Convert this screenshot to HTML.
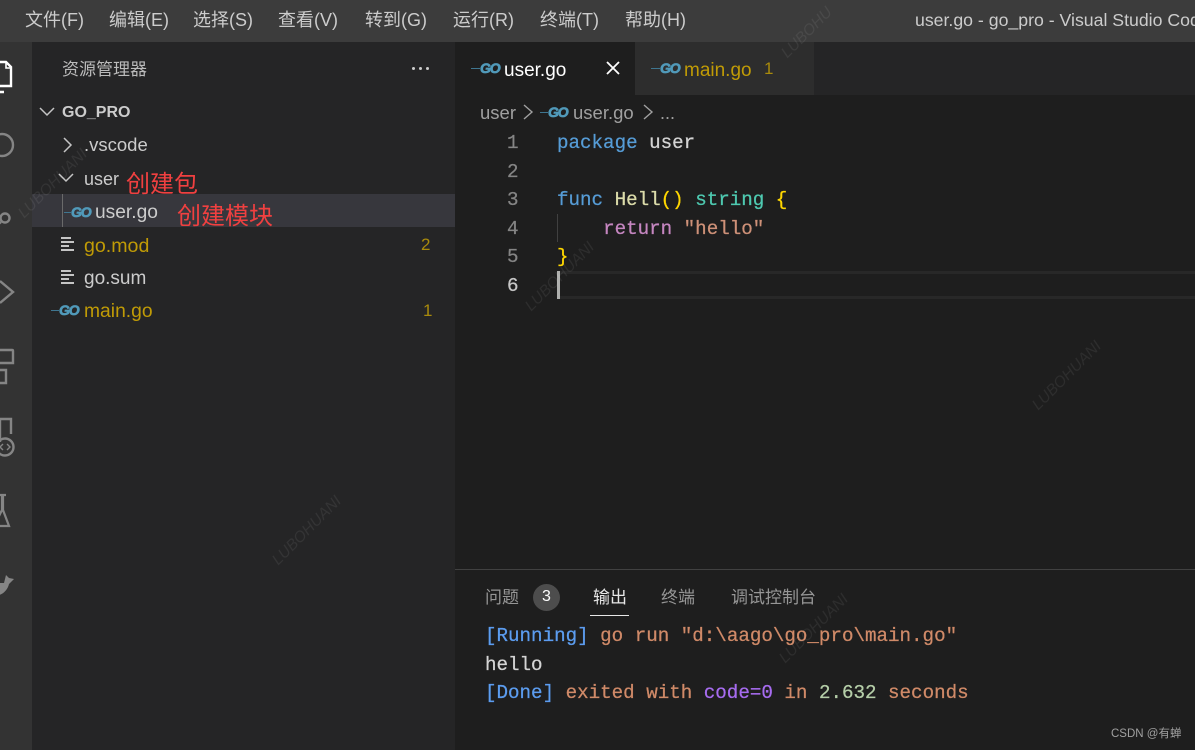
<!DOCTYPE html>
<html><head><meta charset="utf-8"><style>
html,body{margin:0;padding:0;background:#1e1e1e}
#p{position:relative;width:1195px;height:750px;overflow:hidden;background:#1e1e1e;font-family:"Liberation Sans","Noto Sans CJK SC",sans-serif}
#p div,#p span.a{position:absolute;white-space:pre}
.t{line-height:28px;height:28px}
.m{font-family:"Liberation Mono","Noto Sans CJK SC",monospace;font-size:19.2px;line-height:28px;height:28px;-webkit-text-stroke:.25px}
.go{font-weight:bold;font-style:italic;color:#519aba;font-size:14px;line-height:16px;letter-spacing:-1.2px;-webkit-text-stroke:.7px #519aba}
.dash{height:1px;background:#3f7690}
.wm{font-family:"Liberation Sans",sans-serif;font-style:italic;color:rgba(255,255,255,.07);font-size:15.5px;transform:rotate(-45deg);transform-origin:center}
</style></head><body><div id="p">
<div style="left:0;top:0;width:1195px;height:42px;background:#3c3c3c"></div>
<div style="left:0;top:42px;width:32px;height:708px;background:#333"></div>
<div style="left:32px;top:42px;width:423px;height:708px;background:#252526"></div>
<div style="left:635px;top:42px;width:179px;height:53px;background:#2d2d2d"></div>
<div style="left:814px;top:42px;width:381px;height:53px;background:#252526"></div>
<div style="left:455px;top:42px;width:180px;height:53px;background:#1e1e1e"></div>
<div style="left:455px;top:569px;width:740px;height:1px;background:#414141"></div>

<div class="t" style="left:25px;top:6px;font-size:18px;color:#ccc">文件(F)</div>
<div class="t" style="left:109px;top:6px;font-size:18px;color:#ccc">编辑(E)</div>
<div class="t" style="left:193px;top:6px;font-size:18px;color:#ccc">选择(S)</div>
<div class="t" style="left:278px;top:6px;font-size:18px;color:#ccc">查看(V)</div>
<div class="t" style="left:365px;top:6px;font-size:18px;color:#ccc">转到(G)</div>
<div class="t" style="left:453px;top:6px;font-size:18px;color:#ccc">运行(R)</div>
<div class="t" style="left:540px;top:6px;font-size:18px;color:#ccc">终端(T)</div>
<div class="t" style="left:625px;top:6px;font-size:18px;color:#ccc">帮助(H)</div>
<div class="t" style="left:915px;top:6px;font-size:17.7px;color:#ccc">user.go - go_pro - Visual Studio Code</div>

<svg style="position:absolute;left:0;top:42px" width="32" height="560" fill="none" stroke="#858585" stroke-width="2.4">
<path d="M-2 20H6L11 25V44H0M-2 20V50H4" stroke="#fff"/><path d="M6 20V26H11" stroke="#fff" stroke-width="1.6"/>
<circle cx="2" cy="103" r="11"/>
<circle cx="5" cy="176" r="4.5"/><path d="M1 180L-4 184"/>
<path d="M0 239L13 250L0 261"/>
<path d="M-2 308H12Q13 308 13 309V321H-2M-2 328H6V341H-2"/>
<path d="M0 377H11V392M0 400V377"/><circle cx="5" cy="405" r="8.5"/><path d="M3 402L0 405L3 408M7 402L10 405L7 408" stroke-width="1.4"/>
<path d="M-2 453H6M2 453V468L-6 484H9L3 468V453" stroke-width="2.2"/>
<path d="M-2 553C3 553 8 547 9 542L14 537L9 536L6 533L4 541H-2Z" fill="#858585" stroke="none"/>
</svg>

<div class="t" style="left:62px;top:56px;font-size:17px;color:#bbb">资源管理器</div>
<div style="left:412px;top:67px;width:3px;height:3px;border-radius:50%;background:#ccc"></div>
<div style="left:419px;top:67px;width:3px;height:3px;border-radius:50%;background:#ccc"></div>
<div style="left:426px;top:67px;width:3px;height:3px;border-radius:50%;background:#ccc"></div>
<div class="t" style="left:62px;top:99px;font-size:16px;font-weight:bold;color:#ccc">GO_PRO</div>
<div style="left:32px;top:194px;width:423px;height:33px;background:#37373d"></div>
<div style="left:62px;top:194px;width:1px;height:33px;background:#6a6a6a"></div>
<svg style="position:absolute;left:36px;top:100px" width="50" height="90" fill="none" stroke="#c5c5c5" stroke-width="1.5">
<path d="M4 8L11 15L18 8"/><path d="M28 38L35 45L28 52"/><path d="M23 74L30 81L37 74"/>
</svg>
<div class="t" style="left:84px;top:131px;font-size:18.5px;color:#ccc">.vscode</div>
<div class="t" style="left:84px;top:165px;font-size:18px;color:#ccc">user</div>
<div class="t" style="left:95px;top:199px;font-size:19.2px;color:#ccc">user.go</div>
<div class="t" style="left:84px;top:232px;font-size:19.6px;color:#c09b06">go.mod</div>
<div class="t" style="left:84px;top:265px;font-size:19px;color:#ccc">go.sum</div>
<div class="t" style="left:84px;top:298px;font-size:19.3px;color:#c09b06">main.go</div>
<div class="t" style="left:421px;top:231px;font-size:17px;color:#a88a0c">2</div>
<div class="t" style="left:423px;top:297px;font-size:17px;color:#a88a0c">1</div>
<svg style="position:absolute;left:60px;top:236px" width="16" height="50" stroke="#c5c5c5" stroke-width="2">
<path d="M1 2H11M1 6H14M1 10H9M1 14H14"/><path d="M1 35H11M1 39H14M1 43H9M1 47H14"/>
</svg>
<div class="t" style="left:126px;top:171px;font-size:24px;color:#f04040">创建包</div>
<div class="t" style="left:177px;top:203px;font-size:24px;color:#f04040">创建模块</div>

<div class="go" style="left:71px;top:204px">GO</div><div class="dash" style="left:64px;top:212px;width:8px"></div>
<div class="go" style="left:59px;top:302px">GO</div><div class="dash" style="left:51px;top:310px;width:8px"></div>
<div class="go" style="left:480px;top:60px">GO</div><div class="dash" style="left:471px;top:68px;width:9px"></div>
<div class="go" style="left:660px;top:60px">GO</div><div class="dash" style="left:651px;top:68px;width:9px"></div>
<div class="go" style="left:548px;top:104px">GO</div><div class="dash" style="left:540px;top:112px;width:8px"></div>

<div class="t" style="left:504px;top:57px;font-size:19px;color:#fff">user.go</div>
<svg style="position:absolute;left:605px;top:60px" width="16" height="16" stroke="#fff" stroke-width="1.8"><path d="M2 2L14 14M14 2L2 14"/></svg>
<div class="t" style="left:684px;top:57px;font-size:19px;color:#c09b06">main.go</div>
<div class="t" style="left:764px;top:55px;font-size:17px;color:#a88a0c">1</div>

<div class="t" style="left:480px;top:99px;font-size:18.5px;color:#a0a0a0">user</div>
<div class="t" style="left:573px;top:99px;font-size:18.5px;color:#a0a0a0">user.go</div>
<div class="t" style="left:660px;top:99px;font-size:18px;color:#a0a0a0">...</div>
<svg style="position:absolute;left:520px;top:102px" width="140" height="20" fill="none" stroke="#a0a0a0" stroke-width="1.4"><path d="M4 3L12 10L4 17M124 3L132 10L124 17"/></svg>

<div style="left:557px;top:271px;width:638px;height:3px;background:#282828"></div>
<div style="left:557px;top:296px;width:638px;height:3px;background:#282828"></div>
<div style="left:557px;top:214px;width:1px;height:28px;background:#404040"></div>
<div style="left:557px;top:271px;width:3px;height:28px;background:#aeafad"></div>

<div class="m" style="left:507px;top:129px;color:#858585">1</div>
<div class="m" style="left:507px;top:158px;color:#858585">2</div>
<div class="m" style="left:507px;top:186px;color:#858585">3</div>
<div class="m" style="left:507px;top:215px;color:#858585">4</div>
<div class="m" style="left:507px;top:243px;color:#858585">5</div>
<div class="m" style="left:507px;top:272px;color:#c6c6c6">6</div>
<div class="m" style="left:557px;top:129px;color:#d4d4d4"><span style="color:#569cd6">package</span> user</div>
<div class="m" style="left:557px;top:186px;color:#d4d4d4"><span style="color:#569cd6">func</span> <span style="color:#dcdcaa">Hell</span><span style="color:#ffd700">()</span> <span style="color:#4ec9b0">string</span> <span style="color:#ffd700">{</span></div>
<div class="m" style="left:557px;top:215px">    <span style="color:#c586c0">return</span> <span style="color:#ce9178">"hello"</span></div>
<div class="m" style="left:557px;top:243px;color:#ffd700">}</div>

<div class="t" style="left:485px;top:584px;font-size:17px;color:#969696">问题</div>
<div style="left:533px;top:584px;width:27px;height:27px;border-radius:50%;background:#4d4d4d;color:#fff;font-size:16px;line-height:26px;text-align:center">3</div>
<div class="t" style="left:593px;top:584px;font-size:17px;color:#e7e7e7">输出</div>
<div style="left:590px;top:615px;width:39px;height:1px;background:#e7e7e7"></div>
<div class="t" style="left:661px;top:584px;font-size:17px;color:#969696">终端</div>
<div class="t" style="left:731px;top:584px;font-size:17px;color:#969696">调试控制台</div>

<div class="m" style="left:485px;top:622px;color:#d08a68"><span style="color:#5c9df0">[Running]</span> go run "d:\aago\go_pro\main.go"</div>
<div class="m" style="left:485px;top:651px;color:#d4d4d4">hello</div>
<div class="m" style="left:485px;top:679px;color:#d08a68"><span style="color:#5c9df0">[Done]</span> exited with <span style="color:#a76cf0">code=0</span> <span>in</span> <span style="color:#b5cea8">2.632</span> seconds</div>

<div class="t" style="left:1111px;top:720px;font-size:11.5px;color:#a0a0a0">CSDN @有蝉</div>

<div class="wm" style="left:8px;top:175px">LUBOHUANI</div>
<div class="wm" style="left:775px;top:24px">LUBOHU</div>
<div class="wm" style="left:515px;top:268px">LUBOHUANI</div>
<div class="wm" style="left:1022px;top:367px">LUBOHUANI</div>
<div class="wm" style="left:262px;top:522px">LUBOHUANI</div>
<div class="wm" style="left:769px;top:620px">LUBOHUANI</div>
</div></body></html>
